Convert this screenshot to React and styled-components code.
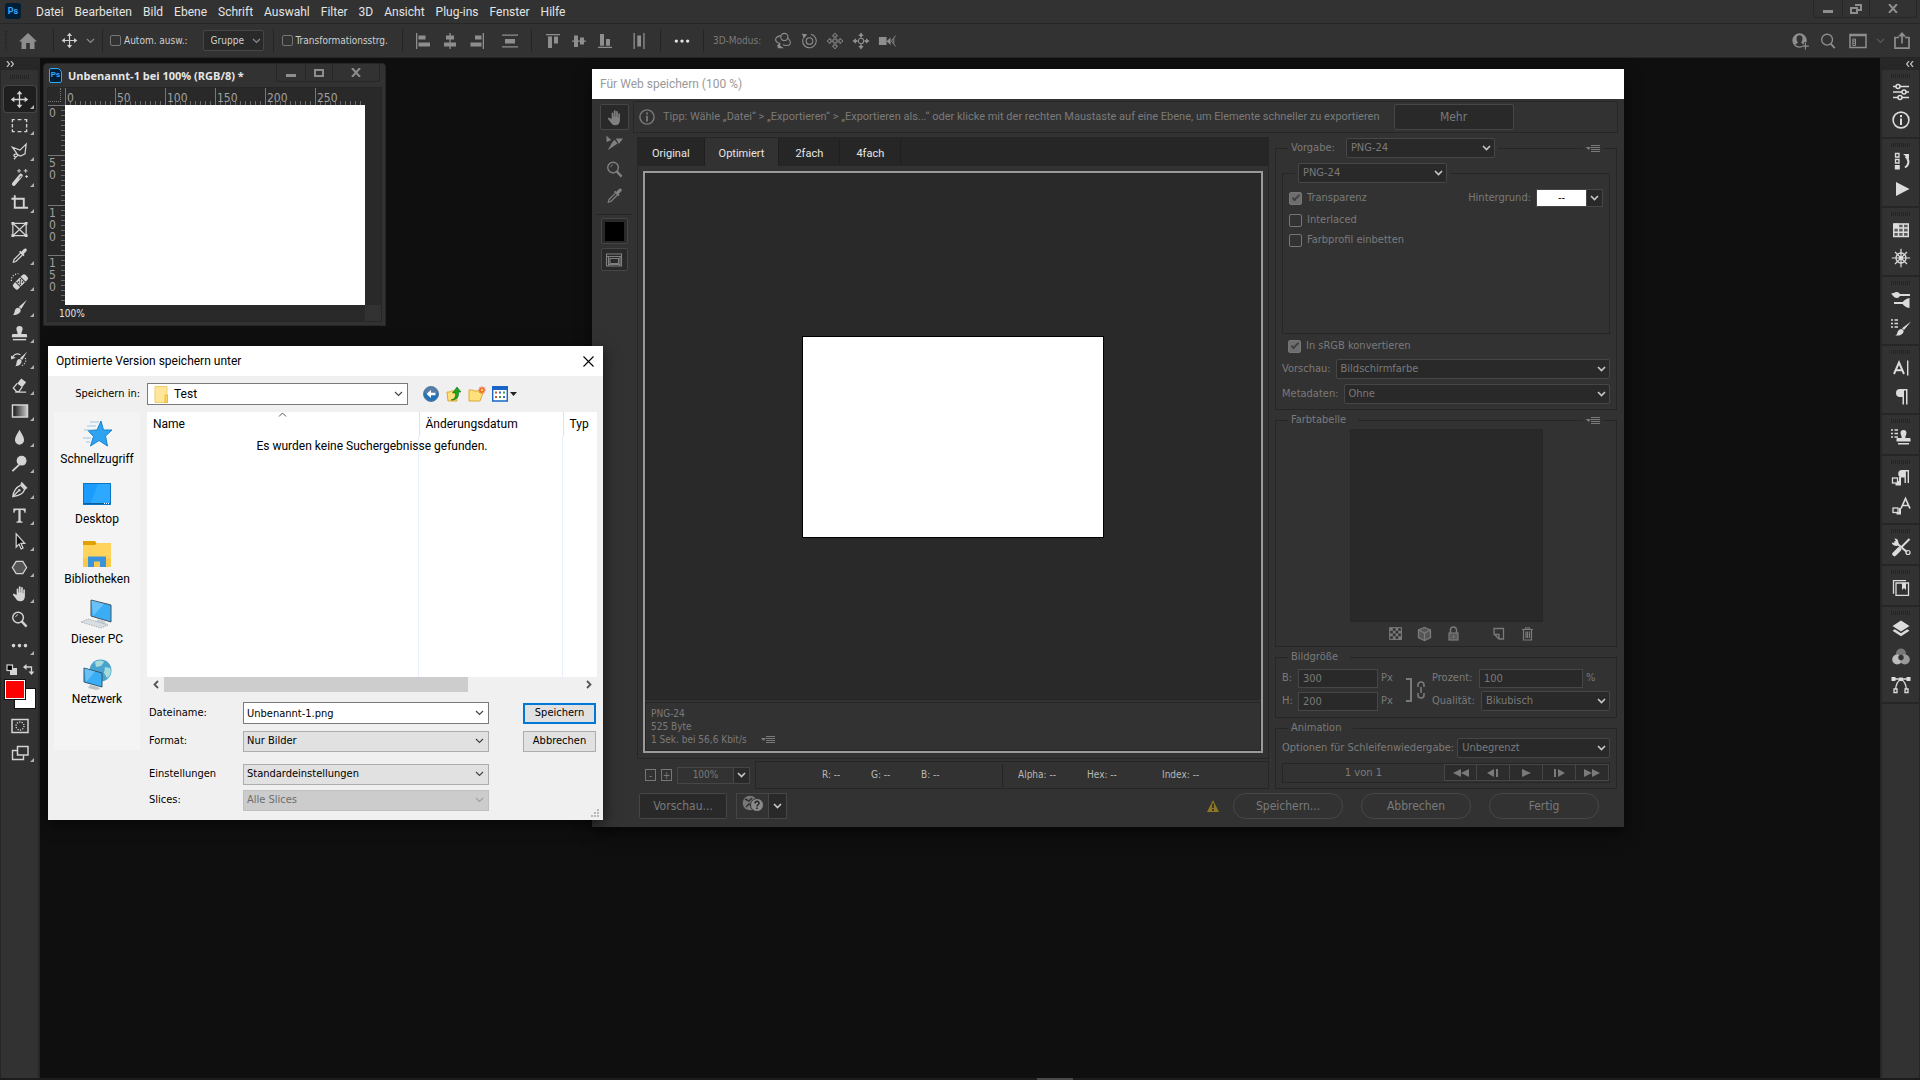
import React from "react";
import styled, { createGlobalStyle, css } from "styled-components";

const UI = `Roboto, "Open Sans", sans-serif`;
const PANEL = `"DejaVu Sans Condensed", "DejaVu Sans", sans-serif`;

const c = {
  bg: "#323232",
  dark: "#292929",
  darker: "#262626",
  line: "#262626",
  edge: "#464646",
  canvas: "#0f0f0f",
  icon: "#d4d4d4",
  mute: "#8e8e8e",
  dim: "#7a7a7a",
};

const Global = createGlobalStyle`
  *, *::before, *::after { box-sizing: border-box; }
  body { margin: 0; background: ${c.canvas}; overflow: hidden; }
  button, input, select { font: inherit; color: inherit; margin: 0; padding: 0; border: 0; background: none; border-radius: 0; outline: none; }
  svg { display: block; flex: none; }
`;

/* ---------- icons ---------- */

const Svg = ({ size = 20, w, h, box, children }) => (
  <svg
    width={w || size}
    height={h || size}
    viewBox={box || `0 0 ${w || size} ${h || size}`}
    fill="none"
    stroke="currentColor"
    strokeWidth="1.5"
    aria-hidden="true"
  >
    {children}
  </svg>
);
const F = (p) => <path fill="currentColor" stroke="none" {...p} />;

const I = {
  move: (
    <>
      <path d="M10 3v14M3 10h14" strokeWidth="1.4" />
      <F d="M10 .8 13 4.6H7zM10 19.2 7 15.4h6zM.8 10 4.6 7v6zM19.2 10 15.4 13V7z" />
    </>
  ),
  marquee: <path d="M2.5 6.5V3.8H5M8 3.8h4M15 3.8h2.5v2.7M17.5 8.5v3.5M17.5 14v2.5H15M12 16.5H8M5 16.5H2.5V14M2.5 12V8.5" strokeWidth="1.4" />,
  lasso: <path d="M7.5 12.5 2.5 5.5l8 3L17 2.2l-1.2 10.3-4.8 2.3-4-2c-2.2-.6-3.6 1-2.5 2.2s4 .3 3.6-1.7M6 15.3c-.2 1.3-.8 2.2-1.9 2.9" strokeWidth="1.3" />,
  wand: (
    <>
      <path d="M4 16.8 11.5 8" strokeWidth="4" strokeLinecap="round" />
      <path d="M9.7 11 12 8.3" stroke="#323232" strokeWidth="1" />
      <path d="M9.5 1v4M7.5 3h4M16.5 1v4M14.5 3h4M17.5 7.5v3M16 9h3" strokeWidth="1" />
    </>
  ),
  crop: <path d="M1.5 5H14.5v10.5M5 1.2v13.3h10M14 14.5h5" strokeWidth="2" />,
  frame: (
    <>
      <path d="M3 3.5h14v13H3zM3 3.5l14 13M17 3.5l-14 13" strokeWidth="1.3" />
      <F d="M1.5 2h3v3h-3zM15.5 2h3v3h-3zM1.5 15h3v3h-3zM15.5 15h3v3h-3z" />
    </>
  ),
  dropper: (
    <>
      <path d="M11 7.5 4.2 14.3 3.5 17l2.7-.7L13 9.5" strokeWidth="1.3" />
      <F d="M9.5 6.2 10.8 5l1.2 1 2.6-2.8c2-1.8 4.2.4 2.6 2.4L14.4 8.3l1 1.2-1.3 1.3z" />
    </>
  ),
  heal: (
    <>
      <g transform="rotate(-45 11 10.5)">
        <rect x="2" y="6.8" width="18" height="7.4" rx="2.5" fill="currentColor" stroke="none" />
        <path d="M7.5 6.8v7.4M14.5 6.8v7.4" stroke="#323232" strokeWidth="1" />
        <path d="M9.3 9h.1M12.5 9h.1M9.3 12h.1M12.5 12h.1M10.9 10.5h.1" stroke="#323232" strokeWidth="1.6" strokeLinecap="round" />
      </g>
      <path d="M1.5 9.5C1 5 4 2 9 1.8" strokeDasharray="1.2 1.6" strokeWidth="1.2" />
    </>
  ),
  brush: (
    <>
      <F d="M17.8 1.8 11.8 11.6 9.2 9.4z" />
      <F d="M8.3 10.2c1.8.2 2.8 1.2 3 2.7-.3 3-3.6 5.3-8.3 5.1 1.9-1.4 1.5-3 2.2-5 .6-1.7 1.8-2.8 3.1-2.8z" />
    </>
  ),
  stamp: (
    <>
      <F d="M10 2a3.3 3.3 0 0 1 3.3 3.3c0 1.7-1.3 2.7-1.3 5.2h4.5c.8 0 1.5.6 1.5 1.5v2H2v-2c0-.9.7-1.5 1.5-1.5H8c0-2.5-1.3-3.5-1.3-5.2A3.3 3.3 0 0 1 10 2z" />
      <F d="M3 15.7h14V17.2H3z" />
    </>
  ),
  history: (
    <>
      <F d="M18 1.8 12.8 10.5 10.5 8.7z" />
      <F d="M9.7 9.5c1.5.2 2.3 1 2.5 2.3-.3 3-2.7 5.2-6.7 5.2 1.5-1.4 1-2.8 1.5-4.5.4-1.5 1.4-2.9 2.7-3z" />
      <path d="M3 7C5 4 8 3.5 11 5" strokeWidth="1.2" />
      <F d="M1 5.8 6 8.2 1.2 10z" />
      <path d="M16 8.5c1.5 3 0 6-3.5 8" strokeDasharray="1.2 1.6" strokeWidth="1.2" />
    </>
  ),
  eraser: (
    <>
      <F d="M11.8 2.5 17 6.5 12.8 11.8 7.6 7.8z" />
      <path d="M7.6 7.8 3.5 12.5 7 16.5l2.5-.3 3.3-4.4M5.5 17h11.5" strokeWidth="1.4" />
    </>
  ),
  blur: <F d="M10 1.8c2 3.8 4.8 7.2 4.8 10.7a4.8 5 0 0 1-9.6 0C5.2 9 8 5.6 10 1.8z" />,
  dodge: (
    <>
      <circle cx="12.2" cy="7" r="5.2" fill="currentColor" stroke="none" />
      <path d="M9.5 11.5 2.5 18" strokeWidth="2" />
    </>
  ),
  pen: (
    <>
      <path d="M3 17.5C3.5 13 5 8.5 11.5 5.5l4 4.5C13.5 15 8 16.8 3 17.5zM3.5 17 9 11.3" strokeWidth="1.4" />
      <circle cx="9.8" cy="10.7" r="1.3" fill="currentColor" stroke="none" />
      <F d="M12.3 1.8 18.5 8.3 16 10 11 4.3z" />
    </>
  ),
  type: <F d="M3.5 2.5h13V7h-1.3c-.3-2-.8-2.7-2.7-2.7H11.2v10.7c0 1 .4 1.2 2 1.3V17.5H6.8v-1.2c1.6-.1 2-.3 2-1.3V4.3H7.5C5.6 4.3 5.1 5 4.8 7H3.5z" />,
  select: <path d="M6.5 2v14l3-3.3 2.2 5.1 2-.9-2.2-5h4z" fill="#111" strokeWidth="1.3" />,
  shape: <path d="M6.5 3.5h7l4 6.5-4 6.5h-7l-4-6.5z" fill="#555" strokeWidth="1.3" />,
  hand: <F d="M7 11.5V5.2a1 1 0 0 1 1.8 0V9h.5V3a1 1 0 0 1 1.9 0v6h.5V3.8a1 1 0 0 1 1.8 0V9.7h.5V6.2a.9.9 0 0 1 1.7 0v6.3c0 3.6-1.8 5.7-4.9 5.7-2.6 0-3.7-1.2-4.9-3.2L3.2 11.6c-.7-1 .6-1.9 1.5-1.1z" />,
  zoom: (
    <>
      <circle cx="8.5" cy="8" r="5.6" />
      <path d="M6 7.5c.2-1.5 1.2-2.3 2.5-2.5" strokeWidth="1" />
      <path d="M12.3 12 17.5 17.5" strokeWidth="2.4" />
    </>
  ),
  dots: <F d="M3.7 8.2a1.9 1.9 0 1 1-.01 3.8 1.9 1.9 0 0 1 0-3.8zM10 8.2a1.9 1.9 0 1 1-.01 3.8 1.9 1.9 0 0 1 0-3.8zM16.3 8.2a1.9 1.9 0 1 1-.01 3.8 1.9 1.9 0 0 1 0-3.8z" />,
  mask: (
    <>
      <rect x="2" y="3.5" width="16" height="13" />
      <circle cx="10" cy="10" r="4" strokeDasharray="1.2 1.3" strokeWidth="1.3" />
    </>
  ),
  screen: (
    <>
      <path d="M12 8.5H2.5v9h11v-4" strokeWidth="1.4" />
      <rect x="7.5" y="4.5" width="10.5" height="8.5" fill="#323232" />
    </>
  ),
  slice: (
    <>
      <F d="M1.5 2 7 6.8 1.8 9z" />
      <F d="M12 5h8l-4.5 6zM10.5 6.5 14 10.5 3 18 7.5 10z" />
    </>
  ),
  home: <F d="M10 2 19 10.5h-2.5V18h-4.7v-6H8.2v6H3.5v-7.5H1z" />,
  alignL: <F d="M2 2h1.3v16H2zM4.5 4.5h7v4h-7zM4.5 11.5H16v4H4.5z" />,
  alignC: <F d="M9.4 2h1.3v16H9.4zM6 4.5h8v4H6zM4 11.5h12v4H4z" />,
  alignR: <F d="M16.7 2H18v16h-1.3zM9 4.5h6.5v4H9zM4.5 11.5h11v4h-11z" />,
  distV: <F d="M2 3.5h16v1.3H2zM5 8h10v4.5H5zM2 15.2h16v1.3H2z" />,
  alignT: <F d="M3 3h14v1.3H3zM5 5.5h4V17H5zM11 5.5h4v7h-4z" />,
  alignM: <F d="M3 9.4h14v1.3H3zM5 4.5h4v11.5H5zM11 6.5h4v7h-4z" />,
  alignB: <F d="M3 15.7h14V17H3zM5 3h4v11.8H5zM11 8h4v6.8h-4z" />,
  distH: <F d="M4.5 2h1.3v16H4.5zM8.3 4.5h3.7v11H8.3zM14.3 2h1.3v16h-1.3z" />,
  orbit: (
    <>
      <circle cx="11.5" cy="5.5" r="4" strokeWidth="1.2" />
      <path d="M7.5 4C3 5 1.5 7 1.8 9c.3 1.5 2 3 4.5 3.8M15 6.5c3 2 4 6 2.5 7.5-1.2 1.2-5 1.2-7.5.2" strokeWidth="1.2" />
      <F d="M7 11.5v6L3 15.5zM5 14l6 4H4z" />
    </>
  ),
  roll: (
    <>
      <circle cx="10.5" cy="10" r="3.7" strokeWidth="1.2" />
      <path d="M6.5 3.5A7.6 7.6 0 1 0 12 2.5" strokeWidth="1.2" />
      <F d="M2 2l6 .5L4.5 7z" />
    </>
  ),
  pan: <path d="M10 1.2 12.8 4.5H11v4.5h4.5V7.2L18.8 10l-3.3 2.8V11H11v4.5h1.8L10 18.8 7.2 15.5H9V11H4.5v1.8L1.2 10l3.3-2.8V9H9V4.5H7.2z" strokeWidth="1.1" />,
  slide: (
    <>
      <circle cx="10" cy="10" r="3" strokeWidth="1.2" />
      <F d="M10 .5l3 4h-2V6H9V4.5H7zM10 19.5l-3-4h2v-1.5h2v1.5h2zM.5 10l4-3v2H6v2H4.5v2zM19.5 10l-4-3v2H14v2h1.5v2z" />
    </>
  ),
  cam: (
    <>
      <F d="M1 5.5h8.5v9H1zM9.5 10.2 14 6v8.5z" />
      <path d="M19.5 4 15 10l4.5 6M17.5 7v6" strokeWidth="1" />
    </>
  ),
  user: (
    <>
      <F
        fillRule="evenodd"
        d="M9.5 1.5a8 8 0 1 1 0 16 8 8 0 0 1 0-16zM9.5 3.7c-2.3 0-3.3 1.7-3.3 3.7 0 1.7.6 2.8 1.3 3.7.2 1.3-.4 1.7-2.9 2.8a6.7 6.7 0 0 0 9.8 0c-2.5-1.1-3.1-1.5-2.9-2.8.7-.9 1.3-2 1.3-3.7 0-2-1-3.7-3.3-3.7z"
      />
      <path d="M16 11.5v8M12 15.5h8" stroke="#323232" strokeWidth="3.5" />
      <path d="M16 12v7.5M12.3 15.7h7.5" strokeWidth="1.3" />
    </>
  ),
  search: (
    <>
      <circle cx="9" cy="8.5" r="6" />
      <path d="M13 13l4.5 4.8" strokeWidth="2" />
    </>
  ),
  workspace: (
    <>
      <path d="M2 3.5h16v13H2zM2 4.5h16" strokeWidth="1.5" />
      <path d="M4.8 8h2.7v6.5H4.8zM5 10h2M5 12.2h2" strokeWidth="1" />
    </>
  ),
  share: (
    <>
      <path d="M7 6.5H3v10.7h14V6.5h-4" strokeWidth="1.7" />
      <path d="M10 12.5V4" strokeWidth="1.7" />
      <F d="M10 1l4 4.5H6z" />
    </>
  ),
  sliders: (
    <>
      <path d="M2 4.5h3M9 4.5h9M2 10h9M15 10h3M2 15.5h5M11 15.5h7" strokeWidth="1.4" />
      <circle cx="7" cy="4.5" r="2" /> <circle cx="13" cy="10" r="2" /> <circle cx="9" cy="15.5" r="2" />
    </>
  ),
  info: (
    <>
      <circle cx="10" cy="10" r="7.9" strokeWidth="1.6" />
      <F d="M9 5h2v2.2H9zM9 8.5h2v6.5H9z" />
    </>
  ),
  hist: (
    <>
      <path d="M4.5 2.5H8V6H4.5zM4.5 8.5H8V12H4.5z" strokeWidth="1.3" />
      <F d="M3.8 14h5v4.5h-5zM12 3h6v5z" />
      <path d="M14.5 5.5c4 3 4 8-.5 11" strokeWidth="2" />
    </>
  ),
  play: <F d="M5 3 18.5 10 5 17z" />,
  grid: (
    <>
      <F d="M3 3.5h14v13H3z" opacity=".25" />
      <F d="M3 3.5h5V8H3z" />
      <path d="M2.7 4h14.6v12.5H2.7zM2.7 8h14.6M2.7 12.2h14.6M7.5 4v12.5M12.3 4v12.5" strokeWidth="1.4" />
    </>
  ),
  wheel: (
    <>
      <circle cx="10" cy="10" r="5" strokeWidth="1.3" />
      <circle cx="10" cy="10" r="1.8" strokeWidth="1" />
      <path d="M10 .8v18.4M.8 10h18.4M4 4l12 12M16 4 4 16" strokeWidth="1.2" />
    </>
  ),
  brushSets: (
    <>
      <path d="M8 6h11M3 14h9" strokeWidth="2" />
      <F d="M0 4.5c3-.2 3.5-1.5 5.5-1.5C7.5 3 9 4.3 9 6S7.5 9 5.5 9C3 9 2 6.5 0 4.5zM18.5 9v10c-3 0-6.5-3-7.5-5 1-2 4-4.5 7.5-5z" />
    </>
  ),
  brushList: (
    <>
      <path d="M0 3h2M0 6.5h2M0 10h2M3.5 3H7M3.5 6.5H7M3.5 10H7" strokeWidth="1.4" />
      <F d="M20 4.5 13 13l-2-1.8zM10.3 12c2 .3 2.8 1.8 2 3.5-1 2.3-4 3.5-8 3 2-1 1.5-2 2.5-4 .8-1.5 2-2.5 3.5-2.5z" />
    </>
  ),
  char: (
    <>
      <path d="M3 16 8 4.5 13 16M4.8 12.3h6.4" strokeWidth="1.9" />
      <path d="M16.7 2.5v15" strokeWidth="1.4" />
    </>
  ),
  para: <F d="M9 3h7.5v15.5h-1.5V4.5h-2v14h-1.5V11H9a4 4 0 0 1 0-8z" />,
  stampList: (
    <>
      <path d="M0 3h2M0 6.5h2M0 10h2M3.5 3H7M3.5 6.5H7M3.5 10H7" strokeWidth="1.4" />
      <F d="M12.5 3a3 3 0 0 1 3 3c0 1.5-1.2 2.5-1.2 5h4.2c.6 0 1 .5 1 1v2.5H5.5V12c0-.5.4-1 1-1h4.2c0-2.5-1.2-3.5-1.2-5a3 3 0 0 1 3-3zM7 16h11v1.4H7z" />
    </>
  ),
  paraStyle: (
    <>
      <F d="M11 2h7v13h-1.4V3.5h-1.7V15h-1.4V9.500H11a3.700 3.700 0 0 1 0-7.500zM4.500 13H8V9h2v8.500H4.500z" />
      <rect x="1.5" y="10" width="5" height="5" fill="#323232" strokeWidth="1.3" />
    </>
  ),
  charStyle: (
    <>
      <path d="M10 12.5 14.5 2.5 19 12.5M11.7 9.5h5.6" strokeWidth="1.7" />
      <F d="M5.5 16H8v-4h2v6.5H5.5z" />
      <rect x="2" y="12" width="5" height="4.5" fill="#323232" strokeWidth="1.3" />
    </>
  ),
  tools: (
    <>
      <path d="M3.5 4.5 16 15" strokeWidth="2" />
      <path d="M18.5 2 10 10.5" strokeWidth="2" />
      <path d="M8 12.5 3.5 17" strokeWidth="4.5" strokeLinecap="round" />
      <F d="M3.5 1.5C6 1.5 7.5 3 7.3 5.3L8 7l-2 2C3 9 1 7.8.8 5.5L3.5 6 5 4.500z" />
      <circle cx="17" cy="15.5" r="2" strokeWidth="1.2" />
    </>
  ),
  library: (
    <>
      <path d="M15 2.7H2.5v13M5 5h12.5v12.3H5z" strokeWidth="1.3" />
      <F d="M11 5h4v7l-2-2-2 2z" />
    </>
  ),
  layers: <F d="M10 1.5 18.5 7 10 12.5 1.5 7zM10 14.2 16.2 10.2 18.5 11.8 10 17.3 1.5 11.8 3.8 10.2z" />,
  channels: (
    <>
      <circle cx="10" cy="6.5" r="5" fill="#777" stroke="none" />
      <circle cx="6.2" cy="12.5" r="5" fill="#bdbdbd" stroke="none" />
      <circle cx="13.8" cy="12.5" r="5" fill="#9a9a9a" stroke="none" />
      <circle cx="10" cy="10.5" r="2.7" fill="#333" stroke="none" />
    </>
  ),
  paths: (
    <>
      <path d="M3 4h14M4.5 15C5 9 7 5.5 10 4.5c3 1 5 4.5 5.5 10.5" strokeWidth="1.3" />
      <F d="M.5 2h4v4h-4zM15.5 2h4v4h-4zM8.2 2.5h3.5V6H8.2z" />
      <path d="M3 14h3v3.5H3zM14 14h3v3.5h-3z" fill="#323232" strokeWidth="1.3" />
    </>
  ),
  transp: (
    <>
      <rect x="3" y="3" width="13" height="13" strokeWidth="1.2" />
      <F d="M3 3h3.5v3.5H3zM9.5 3h3v3.5h-3zM6.5 6.5h3v3h-3zM12.5 6.5H16v3h-3.5zM3 9.5h3.5v3H3zM9.5 9.5h3v3h-3zM6.5 12.5h3V16h-3zM12.5 12.5H16V16h-3.5z" />
    </>
  ),
  cube: (
    <>
      <path d="M9.5 3.5 15.5 6v7.5l-6 3-6-3V6z" strokeWidth="1.3" fill="#555" />
      <path d="M3.5 6l6 3 6-3M9.5 9v7.5" strokeWidth="1.2" />
    </>
  ),
  lock: (
    <>
      <path d="M6.5 9V6a3 3 0 0 1 6 0v3" strokeWidth="1.5" />
      <rect x="5" y="9" width="9" height="7" fill="#5a5a5a" strokeWidth="1.2" />
      <F d="M8.8 11.5h1.5v2.5H8.8z" />
    </>
  ),
  note: <path d="M5 4.5h9.5V15H10L5 10zM10 15v-4.5H5" strokeWidth="1.3" />,
  trash: <path d="M4 5.5h11M7.5 5.5V4h4v1.5M5.5 5.5V16h8V5.5M8 7.5v6.5M9.5 7.5v6.5M11.5 7.5v6.5" strokeWidth="1.2" />,
  doc: <path d="M2.5 4h15v12h-15zM2.5 6.5h15M6 8.5h8.5v5H6zM4.500 6.500v9M16 6.500v9M4.500 14.500h11" strokeWidth="1.1" />,
};
const Icon = ({ name, size = 20 }) => (
  <Svg size={size} box="0 0 20 20">
    {I[name]}
  </Svg>
);
const Chevron = ({ bold }) => (
  <Svg w={9} h={6}>
    <path d="M1 1l3.5 3.5L8 1" strokeWidth={bold ? 1.6 : 1.2} />
  </Svg>
);
const FlyIcon = () => (
  <Svg w={14} h={8}>
    <F d="M0 2h5L2.5 5z" />
    <path d="M5 .5h9M5 2.5h9M5 4.5h9M5 6.5h9" strokeWidth="1" />
  </Svg>
);
const MinimizeIcon = () => (
  <Svg w={10} h={10}>
    <F d="M0 6h10v3H0z" />
  </Svg>
);
const CrossIcon = () => (
  <Svg w={10} h={9}>
    <path d="M1 0l8 9M9 0 1 9" strokeWidth="2" />
  </Svg>
);

/* ---------- shell ---------- */

const Shell = styled.div`
  height: 100vh;
  display: flex;
  flex-direction: column;
  background: ${c.canvas};
  color: #ddd;
  font: 11px/14px ${PANEL};
`;
const MenuBar = styled.header`
  display: flex;
  height: 24px;
  padding: 0 3px 0 5px;
  background: ${c.bg};
  border-bottom: 1px solid ${c.line};
`;
const PsLogo = styled.span`
  display: grid;
  place-items: center;
  width: 16px;
  height: 16px;
  margin-top: 3px;
  border-radius: 3px;
  background: #001e36;
  color: #31a8ff;
  font: bold 9px/16px ${UI};
`;
const Menus = styled.nav`
  display: flex;
  flex: 1;
  gap: 11px;
  padding-left: 15px;
  font: 12px/22px ${UI};
`;
const MenuItem = styled.button`
  color: #e4e4e4;
`;
const WinButtons = styled.div`
  display: flex;
  align-self: flex-start;
  height: 18px;
  border: 1px solid ${c.line};
  border-top: 0;
  border-radius: 0 0 3px 3px;
  color: ${c.mute};
`;
const WinButton = styled.button`
  display: grid;
  place-items: center;
  width: ${(p) => p.$w || 27}px;
  & + & {
    border-left: 1px solid ${c.line};
  }
`;

const Options = styled.div`
  display: flex;
  align-items: center;
  height: 34px;
  padding: 0 8px 0 5px;
  background: ${c.bg};
  border-bottom: 1px solid ${c.line};
  color: #d0d0d0;
  font: 10px/14px ${PANEL};
`;
const Grip = styled.span`
  flex: none;
  width: ${(p) => (p.$v ? 2 : 19)}px;
  height: ${(p) => (p.$v ? 20 : 4)}px;
  background: repeating-linear-gradient(
    ${(p) => (p.$v ? 180 : 90)}deg,
    #242424 0 1px,
    transparent 1px 2px
  );
`;
const OptGroup = styled.div`
  display: flex;
  align-items: center;
  gap: ${(p) => p.$gap || 0}px;
  padding: 0 ${(p) => p.$pr ?? 11}px 0 ${(p) => p.$pl ?? 11}px;
  color: ${(p) => p.$color || "inherit"};
`;
const Sep = styled.span`
  width: 1px;
  height: 23px;
  background: #242424;
`;
const IconButton = styled.button`
  display: grid;
  place-items: center;
  width: ${(p) => p.$w || 20}px;
  height: 20px;
  color: ${(p) => p.$color || "inherit"};
`;
const CheckLabel = styled.label`
  display: flex;
  align-items: center;
  gap: ${(p) => p.$gap || 4}px;
  white-space: nowrap;
`;
const Check = styled.input.attrs({ type: "checkbox" })`
  appearance: none;
  display: grid;
  place-items: center;
  flex: none;
  width: ${(p) => (p.$small ? 11 : 13)}px;
  height: ${(p) => (p.$small ? 11 : 13)}px;
  border: 1px solid #767676;
  border-radius: 2px;
  &:checked {
    background: #6e6e6e;
  }
  &:checked::before {
    content: "";
    width: 4px;
    height: 8px;
    margin-top: -2px;
    border: solid #404040;
    border-width: 0 2px 2px 0;
    transform: rotate(45deg);
  }
`;

/* a drop-down: the select and its chevron share one grid cell */
const SelectBox = styled.span`
  display: grid;
  align-items: center;
  height: ${(p) => p.$h || 20}px;
  ${(p) => (p.$w ? `width: ${p.$w}px;` : "flex: 1;")}
  min-width: 0;
  color: ${(p) => p.$arrow || "#c8c8c8"};
  & > * {
    grid-area: 1 / 1;
  }
  & > svg {
    justify-self: end;
    margin-right: ${(p) => p.$ar || 4}px;
    pointer-events: none;
  }
`;
const DarkSelect = styled.select`
  appearance: none;
  width: 100%;
  height: 100%;
  padding: 0 14px 0 ${(p) => p.$pl || 4}px;
  background: ${c.dark};
  border: 1px solid ${c.edge};
  border-radius: 2px;
  color: ${(p) => p.$color || c.dim};
`;
const Select = ({ id, label, value, options, w, h, color, pl, arrow, ar }) => (
  <SelectBox $w={w} $h={h} $arrow={arrow} $ar={ar}>
    <DarkSelect id={id} aria-label={label} defaultValue={value} $color={color} $pl={pl}>
      {(options || [value]).map((o) => (
        <option key={o}>{o}</option>
      ))}
    </DarkSelect>
    <Chevron bold={!arrow} />
  </SelectBox>
);

const Workspace = styled.div`
  display: flex;
  flex: 1;
  min-height: 0;
`;
const Stage = styled.main`
  position: relative;
  flex: 1;
  min-width: 0;
  overflow: hidden;
`;
const StatusStrip = styled.footer`
  display: flex;
  height: 2px;
  padding-left: 54%;
  background: #1c1c1c;
`;
const StripThumb = styled.span`
  width: 36px;
  background: #4a4a4a;
`;

/* ---------- left toolbar and right dock ---------- */

const Column = styled.aside`
  display: flex;
  flex-direction: column;
  align-items: stretch;
  width: 40px;
  background: ${c.bg};
  border: solid ${c.line};
  border-width: 0 ${(p) => (p.$left ? 2 : 1)}px 0 ${(p) => (p.$left ? 1 : 2)}px;
`;
const ColumnHead = styled.button`
  display: flex;
  align-items: center;
  justify-content: ${(p) => (p.$end ? "flex-end" : "flex-start")};
  height: 12px;
  padding: 0 5px;
  background: #272727;
  border-bottom: 1px solid ${c.line};
  color: #c0c0c0;
`;
const ToolList = styled.div`
  display: flex;
  flex-direction: column;
  align-items: center;
  padding-top: 3px;
`;
const GripRow = styled.div`
  display: grid;
  place-items: center;
  height: 13px;
`;
const Tool = styled.button`
  display: grid;
  width: 32px;
  height: 26px;
  color: ${c.icon};
  border-radius: 3px;
  ${(p) =>
    p.$active &&
    css`
      background: #1f1f1f;
      box-shadow: 0 0 0 1px ${c.edge};
    `}
  & > svg {
    grid-area: 1 / 1;
    place-self: center;
  }
`;
const Corner = styled.i`
  grid-area: 1 / 1;
  place-self: end;
  margin: 0 2px 3px 0;
  border: solid transparent;
  border-width: 0 0 4px 4px;
  border-bottom-color: #b0b0b0;
`;
const MiniRow = styled.div`
  display: flex;
  align-items: center;
  gap: 6px;
  height: 22px;
  color: ${c.icon};
`;
const Swatches = styled.div`
  display: grid;
  grid-template: 9px 10px 9px / 10px 10px 10px;
  margin-bottom: 5px;
`;
const Swatch = styled.button`
  grid-area: ${(p) => p.$area};
  z-index: ${(p) => p.$z};
  background: ${(p) => p.$color};
  border: 1px solid #fff;
  outline: 1px solid #111;
`;
const DockGroup = styled.div`
  display: flex;
  flex-direction: column;
  align-items: center;
  padding: 4px 0 3px;
  border-bottom: 2px solid ${c.line};
  color: #dcdcdc;
`;
const DockButton = styled.button`
  display: grid;
  place-items: center;
  width: 28px;
  height: 28px;
`;

/* ---------- document window ---------- */

const DocWindow = styled.section`
  position: absolute;
  left: 3px;
  top: 5px;
  width: 343px;
  padding: 0 3px 3px;
  background: ${c.bg};
  border: 1px solid #262626;
  border-radius: 4px 4px 0 0;
`;
const DocTitle = styled.div`
  display: flex;
  align-items: flex-start;
  gap: 6px;
  height: 23px;
  padding: 0 2px;
  color: #e6e6e6;
  font: bold 11px/24px "Open Sans", "Noto Sans", sans-serif;
`;
const DocBadge = styled.span`
  width: 13px;
  height: 15px;
  margin-top: 4px;
  border: 1px solid #31a8ff;
  border-radius: 2px 5px 2px 2px;
  background: #001e36;
  color: #31a8ff;
  font: bold 8px/12px ${UI};
  text-align: center;
`;
const DocName = styled.span`
  flex: 1;
`;
const DocBody = styled.div`
  display: grid;
  grid-template: 17px 200px 16px / 17px 300px 1fr;
  background: ${c.dark};
  border: 1px solid ${c.line};
`;
const RulerOrigin = styled.span`
  margin: 0 4px 3px 0;
  border: dotted #777;
  border-width: 0 1px 1px 0;
`;
const HRuler = styled.div`
  display: flex;
  background: repeating-linear-gradient(90deg, #6b6b6b 0 1px, transparent 1px 5px) 0 100% / 100% 4px no-repeat;
`;
const HTick = styled.span`
  width: 50px;
  padding-left: 1px;
  border-left: 1px solid #777;
  color: #a0a0a0;
  font: 12px/20px ${PANEL};
`;
const VRuler = styled.div`
  background: repeating-linear-gradient(180deg, #6b6b6b 0 1px, transparent 1px 5px) 100% 0 / 4px 100% no-repeat;
`;
const VTick = styled.div`
  display: flex;
  flex-direction: column;
  height: 50px;
  padding: 1px 0 0 1px;
  border-top: 1px solid #777;
  color: #a0a0a0;
  font: 12px/12px ${PANEL};
`;
const Paper = styled.div`
  background: #fff;
`;
const DocStatus = styled.div`
  grid-column: 1 / 3;
  padding-left: 11px;
  font: 10px/18px ${PANEL};
  color: #e4e4e4;
`;
const DocCorner = styled.span`
  background: ${c.bg};
`;

/* ---------- save for web ---------- */

const WebDialog = styled.section`
  position: absolute;
  left: 552px;
  top: 11px;
  width: 1032px;
  background: ${c.bg};
  color: ${c.dim};
  box-shadow: 0 6px 14px rgba(0, 0, 0, 0.6);
`;
const WebTitle = styled.h1`
  margin: 0;
  padding-left: 8px;
  background: #fff;
  color: #999;
  font: 12px/30px ${UI};
`;
const WebMain = styled.div`
  display: flex;
  padding: 2px 6px 8px 4px;
`;
const WebTools = styled.div`
  display: flex;
  flex-direction: column;
  align-items: center;
  width: 37px;
  padding: 3px 1px 0 0;
`;
const WebTool = styled.button`
  display: grid;
  place-items: center;
  width: ${(p) => (p.$boxed ? 27 : 29)}px;
  height: ${(p) => p.$h || 26}px;
  color: #808080;
  ${(p) =>
    p.$on &&
    css`
      background: ${c.dark};
      border: 1px solid ${c.edge};
      border-radius: 2px;
    `}
`;
const ToolRule = styled.span`
  align-self: stretch;
  height: 1px;
  margin: 6px 0 3px;
  background: ${c.line};
`;
const ToolStack = styled.div`
  display: grid;
  gap: 4px;
`;
const BlackChip = styled.span`
  width: 19px;
  height: 19px;
  background: #000;
`;
const WebContent = styled.div`
  flex: 1;
  min-width: 0;
`;
const TipBar = styled.div`
  display: flex;
  align-items: center;
  height: 32px;
  padding: 0 4px;
  border: 1px solid ${c.line};
`;
const TipText = styled.p`
  margin: 0 14px 0 7px;
  font: 11px/16px ${UI};
  white-space: nowrap;
`;
const DarkButton = styled.button`
  height: 26px;
  width: ${(p) => p.$w}px;
  background: ${(p) => (p.$pill ? c.bg : c.dark)};
  border: 1px solid ${c.edge};
  border-radius: ${(p) => (p.$pill ? 13 : 2)}px;
  font: 12px/16px ${PANEL};
`;
const Panes = styled.div`
  display: grid;
  grid-template-columns: minmax(0, 1fr) 342px;
  column-gap: 6px;
  padding: 4px 1px 0 4px;
`;
const PreviewCol = styled.div`
  display: flex;
  flex-direction: column;
  gap: 2px;
`;
const Preview = styled.div`
  display: flex;
  flex-direction: column;
  flex: 1;
  border: 1px solid ${c.line};
`;
const Tabs = styled.div`
  display: flex;
  height: 28px;
  background: ${c.darker};
`;
const Tab = styled.button`
  padding: 3px 14px 0;
  min-width: 61px;
  border-right: 1px solid #1f1f1f;
  background: ${(p) => (p.$on ? c.bg : "transparent")};
  color: #e6e6e6;
  font: 11px/14px ${UI};
`;
const Frame = styled.div`
  display: flex;
  flex-direction: column;
  flex: 1;
  margin: 5px;
  border: 2px solid #9a9a9a;
`;
const ImagePane = styled.div`
  display: grid;
  place-items: center;
  flex: 1;
  background: ${c.dark};
  border: 1px solid ${c.line};
`;
const ImagePaper = styled.div`
  width: 302px;
  height: 202px;
  background: #fff;
  border: 1px solid #000;
`;
const FileInfo = styled.div`
  height: 49px;
  margin-top: 2px;
  padding: 4px 5px;
  border: 1px solid ${c.line};
  font: 10px/13px ${PANEL};
`;
const InfoLine = styled.div`
  display: flex;
  align-items: center;
  gap: 14px;
`;
const ReadoutRow = styled.div`
  display: flex;
  align-items: center;
  height: 28px;
  padding-left: 8px;
  gap: 5px;
`;
const StepButton = styled.button`
  width: 11px;
  height: 12px;
  border: 1px solid #777;
  font: 10px/9px ${PANEL};
`;
const ComboBox = styled.div`
  display: flex;
  width: ${(p) => p.$w}px;
  height: ${(p) => p.$h || 17}px;
  border: 1px solid ${c.edge};
`;
const ComboInput = styled.input`
  flex: 1;
  min-width: 0;
  text-align: center;
  font-size: 10px;
`;
const ComboArrow = styled.button`
  display: grid;
  place-items: center;
  width: ${(p) => p.$w || 16}px;
  background: ${c.dark};
  border-left: 1px solid ${c.edge};
  color: #c8c8c8;
`;
const Readout = styled.div`
  display: flex;
  flex: 1;
  align-self: stretch;
  align-items: center;
  padding-left: 66px;
  border: 1px solid ${c.line};
  color: #b8b8b8;
  font-size: 10px;
`;
const Val = styled.span`
  width: ${(p) => p.$w}px;
`;

/* settings */

const Settings = styled.div`
  display: flex;
  flex-direction: column;
  gap: 2px;
  padding-top: 1px;
  font-size: 11px;
`;
const Group = styled.fieldset`
  position: relative;
  margin: 0;
  min-width: 0;
  padding: 0 6px ${(p) => p.$pb || 5}px;
  border: 1px solid ${c.line};
`;
const Legend = styled.legend`
  display: flex;
  align-items: center;
  gap: 11px;
  margin-left: 6px;
  padding: 0 ${(p) => p.$pr || 3}px 0 3px;
  line-height: 16px;
`;
const FlyButton = styled.button`
  position: absolute;
  top: ${(p) => p.$top}px;
  right: 13px;
  padding: 0 3px;
  background: ${c.bg};
`;
const Inner = styled.fieldset`
  margin: 5px 0 0;
  min-width: 0;
  min-height: 171px;
  padding: 5px 6px 0;
  border: 1px solid ${c.line};
`;
const Line = styled.div`
  display: flex;
  align-items: center;
  height: 20px;
  gap: ${(p) => p.$gap || 5}px;
  margin-top: ${(p) => p.$mt || 0}px;
  padding-left: ${(p) => p.$pl || 0}px;
`;
const ColorCombo = styled.div`
  display: flex;
  width: 67px;
  height: 18px;
  border: 1px solid ${c.edge};
`;
const ColorChip = styled.span`
  flex: 1;
  background: #fff;
  color: #000;
  text-align: center;
  line-height: 15px;
`;
const ColorTable = styled.div`
  width: 193px;
  height: 193px;
  margin: 1px auto 0;
  background: ${c.dark};
  border: 1px solid ${c.line};
`;
const TableTools = styled.div`
  display: flex;
  justify-content: center;
  align-items: center;
  gap: 9px;
  height: 23px;
  padding-left: 32px;
`;
const SizeGrid = styled.div`
  display: grid;
  grid-template-columns: 16px 80px 24px 30px 46px minmax(0, 1fr);
  grid-template-rows: 20px 20px;
  row-gap: 3px;
  align-items: center;
  padding-top: 3px;
`;
const NumInput = styled.input`
  width: ${(p) => p.$w || 80}px;
  height: 19px;
  padding: 0 4px;
  background: ${c.dark};
  border: 1px solid ${c.edge};
`;
const UnitLabel = styled.span`
  padding-left: 3px;
`;
const LinkCell = styled.span`
  grid-area: 1 / 4 / 3 / 5;
`;
const Player = styled.div`
  display: flex;
  height: 20px;
  margin-top: 5px;
  border: 1px solid ${c.line};
`;
const FrameCount = styled.output`
  flex: 1;
  text-align: center;
  font: 10px/18px "DejaVu Sans", sans-serif;
`;
const PlayButton = styled.button`
  display: grid;
  place-items: center;
  width: 33px;
  height: 17px;
  background: #2c2c2c;
  border: 1px solid ${c.edge};
  & + & {
    border-left-width: 0;
  }
`;
const WebFooter = styled.div`
  display: flex;
  align-items: center;
  height: 26px;
  margin: 4px 19px 0 6px;
`;
const Fill = styled.span`
  flex: 1;
`;
const Spaced = styled.div`
  display: flex;
  align-items: center;
  gap: ${(p) => p.$gap || 0}px;
  padding-left: ${(p) => p.$pl || 0}px;
`;

/* ---------- windows save dialog ---------- */

const SaveDialog = styled.section`
  position: absolute;
  left: 8px;
  top: 288px;
  width: 555px;
  background: #f0f0f0;
  color: #000;
  font: 12px/16px ${UI};
  box-shadow: 0 4px 14px rgba(0, 0, 0, 0.6);
`;
const SaveTitle = styled.div`
  display: flex;
  align-items: center;
  justify-content: space-between;
  height: 30px;
  padding: 0 9px 0 8px;
  background: #fff;
`;
const SaveName = styled.h2`
  margin: 0;
  font: inherit;
`;
const CloseX = styled.button`
  display: grid;
  place-items: center;
  width: 12px;
  height: 12px;
`;
const LookRow = styled.div`
  display: flex;
  align-items: center;
  height: 36px;
  padding-left: 6px;
`;
const LookLabel = styled.label`
  width: 86px;
  text-align: right;
  font: 11px/16px ${PANEL};
`;
const LightSelectBox = styled.span`
  display: grid;
  grid-template-columns: auto 1fr;
  align-items: center;
  width: ${(p) => p.$w}px;
  height: ${(p) => p.$h || 22}px;
  margin-left: ${(p) => p.$ml || 0}px;
  background: ${(p) => p.$bg || "#fff"};
  border: 1px solid ${(p) => p.$edge || "#7a7a7a"};
  color: ${(p) => p.$arrow || "#444"};
  & > :not(:first-child) {
    grid-area: 1 / 2;
  }
  & > svg:last-child {
    justify-self: end;
    margin-right: 4px;
    pointer-events: none;
  }
`;
const LightSelect = styled.select`
  appearance: none;
  width: 100%;
  height: 100%;
  padding-left: ${(p) => p.$pl || 3}px;
  color: ${(p) => (p.disabled ? "#6d6d6d" : "#000")};
  opacity: 1;
`;
const LightInput = styled.input`
  width: 100%;
  height: 100%;
  padding-left: 3px;
  color: #000;
`;
const NavIcons = styled.div`
  display: flex;
  align-items: center;
  gap: 5px;
  padding-left: 14px;
`;
const SaveBody = styled.div`
  display: flex;
  gap: 7px;
  padding: 0 6px 9px;
`;
const Places = styled.nav`
  width: 86px;
  height: 338px;
  padding-top: 4px;
  background: #f4f4f4;
`;
const Place = styled.a`
  display: flex;
  flex-direction: column;
  align-items: center;
  gap: 1px;
  height: 60px;
  padding-top: 2px;
  color: #000;
  text-decoration: none;
`;
const SaveMain = styled.div`
  flex: 1;
  min-width: 0;
`;
const FileTable = styled.table`
  width: 100%;
  height: 265px;
  table-layout: fixed;
  border-collapse: collapse;
  background: #fff;
`;
const Th = styled.th`
  width: ${(p) => p.$w}px;
  height: 24px;
  padding: 0 6px;
  border-right: 1px solid #e2e2e2;
  font-weight: normal;
  text-align: left;
  &:last-child {
    border-right: 0;
  }
`;
const Td = styled.td`
  padding: 2px 0;
  vertical-align: top;
  text-align: center;
  background: linear-gradient(#e8f0fb, #e8f0fb) 271px 0 / 1px 100% no-repeat,
    linear-gradient(#e8f0fb, #e8f0fb) 415px 0 / 1px 100% no-repeat;
`;
const ThInner = styled.span`
  display: grid;
  grid-template-columns: 1fr auto 1fr;
  height: 24px;
  line-height: 24px;
`;
const HBar = styled.div`
  display: flex;
  align-items: center;
  height: 15px;
  color: #555;
`;
const HArrow = styled.button`
  display: grid;
  place-items: center;
  width: 17px;
  height: 15px;
`;
const HThumb = styled.span`
  width: 304px;
  height: 15px;
  margin-right: auto;
  background: #cdcdcd;
`;
const SaveForm = styled.form`
  display: grid;
  grid-template-columns: 94px 246px minmax(0, 1fr) 73px;
  grid-template-rows: 24px 24px 2px 22px 22px;
  row-gap: 4px;
  align-items: center;
  margin: 9px 1px 0 2px;
  font: 11px/16px ${PANEL};
`;
const FormGap = styled.span`
  grid-column: 1 / -1;
`;
const FormLabel = styled.label`
  grid-column: 1;
`;
const PushButton = styled.button`
  grid-column: 4;
  height: 21px;
  background: #e1e1e1;
  border: ${(p) => (p.$primary ? "2px solid #0078d7" : "1px solid #adadad")};
`;
const SizeGrip = styled.span`
  position: absolute;
  right: 3px;
  bottom: 2px;
  color: #b8b8b8;
`;

/* ---------- data ---------- */

const menus = ["Datei", "Bearbeiten", "Bild", "Ebene", "Schrift", "Auswahl", "Filter", "3D", "Ansicht", "Plug-ins", "Fenster", "Hilfe"];
const tools = [
  ["move", "Verschieben"], ["marquee", "Auswahlrechteck"], ["lasso", "Lasso"], ["wand", "Zauberstab"], ["crop", "Freistellen"],
  ["frame", "Rahmen"], ["dropper", "Pipette"], ["heal", "Reparatur"], ["brush", "Pinsel"], ["stamp", "Stempel"],
  ["history", "Protokollpinsel"], ["eraser", "Radiergummi"], ["gradient", "Verlauf"], ["blur", "Weichzeichner"],
  ["dodge", "Abwedler"], ["pen", "Zeichenstift"], ["type", "Text"], ["select", "Pfadauswahl"], ["shape", "Form"],
  ["hand", "Hand"], ["zoom", "Zoom"], ["dots", "Mehr"],
];
const noCorner = ["frame", "zoom"];
const dock = [
  ["sliders", "info"], ["hist", "play"], ["grid", "wheel"], ["brushSets", "brushList"], ["char", "para"],
  ["stampList"], ["paraStyle", "charStyle"], ["tools"], ["library"], ["layers", "channels", "paths"],
];

const GradientTool = () => (
  <Svg size={20}>
    <defs>
      <linearGradient id="gt" x1="0" x2="1">
        <stop offset="0" stopColor="#111" />
        <stop offset="1" stopColor="#ccc" />
      </linearGradient>
    </defs>
    <rect x="2.5" y="4" width="15" height="12" fill="url(#gt)" />
  </Svg>
);

/* ---------- place icons ---------- */

const PlaceIcon = {
  Schnellzugriff: (
    <svg width="32" height="32" viewBox="0 0 32 32">
      <path d="M20 3l2.500 9H31l-6.500 6 2 10-8.500-5.500L9.500 28l3-9.500L7 12.500l9-.5z" fill="#2ea3f2" stroke="#1583cf" />
      <path d="M9 4h9M6 8h9M3 12h6M2 20h8M5 24h4" stroke="#9fc6e6" strokeWidth="1.2" />
    </svg>
  ),
  Desktop: (
    <svg width="32" height="32" viewBox="0 0 32 32">
      <path d="M2 5h28v22H2z" fill="#1a9cff" />
      <path d="M17 5h13v22H9z" fill="#3bb0ff" opacity=".6" />
      <path d="M2.5 5.5h27v21h-27z" fill="none" stroke="#0a74c4" />
      <path d="M3 25.5h26" stroke="#0b5e9e" />
      <path d="M23 25.5h5" stroke="#fff" strokeDasharray="1 1" />
    </svg>
  ),
  Bibliotheken: (
    <svg width="32" height="32" viewBox="0 0 32 32">
      <path d="M2 3h12l2 3-2 4H2z" fill="#e0a100" />
      <path d="M2 7h12l2-2h14v24H2z" fill="#ffd35c" />
      <path d="M2 20h28v9H2z" fill="#f5c53e" opacity=".6" />
      <path d="M7 29V18.5h18V29h-6v-5.5h-6V29z" fill="#3b93dc" />
    </svg>
  ),
  "Dieser PC": (
    <svg width="34" height="32" viewBox="0 0 34 32">
      <path d="M11 2 31 7v17L11 18z" fill="#39aef5" stroke="#44535e" />
      <path d="M11.5 2.5 24 6 13 18z" fill="#7ccbfb" opacity=".7" />
      <path d="M18 21l7 2v2l3 1-5 2-8-3z" fill="#c9d0d6" />
      <path d="M1 24l7-3 20 6-7 3z" fill="#d9dee2" stroke="#a8b0b6" strokeDasharray="1.5 1" />
    </svg>
  ),
  Netzwerk: (
    <svg width="32" height="32" viewBox="0 0 32 32">
      <circle cx="19.5" cy="12.5" r="11" fill="#4aa3cf" />
      <path d="M14 4c3-2 7-2 9 0l-3 4-5 1zM24 9l5 1c2 4 0 8-3 10l-3-5z" fill="#a5dcd9" />
      <path d="M3 10 21 15v14L3 24z" fill="#39aef5" stroke="#35566b" />
      <path d="M3.5 10.5 14 13.5 5 24z" fill="#7ccbfb" opacity=".7" />
      <path d="M9 27l8 2 2 2-4 1-8-2z" fill="#b9c2c9" />
    </svg>
  ),
};

/* ---------- sections ---------- */

function TopBars() {
  return (
    <>
      <MenuBar>
        <PsLogo>Ps</PsLogo>
        <Menus>
          {menus.map((m) => (
            <MenuItem key={m}>{m}</MenuItem>
          ))}
        </Menus>
        <WinButtons>
          <WinButton $w={28} aria-label="Minimieren"><MinimizeIcon /></WinButton>
          <WinButton aria-label="Wiederherstellen">
            <Svg w={12} h={10}>
              <path d="M5 1h6v5H8M1 4h6v5H1z" strokeWidth="2" />
            </Svg>
          </WinButton>
          <WinButton $w={47} aria-label="Schließen"><CrossIcon /></WinButton>
        </WinButtons>
      </MenuBar>
      <Options>
        <Grip $v />
        <OptGroup $pr={15} $color={c.mute}>
          <IconButton aria-label="Startseite"><Icon name="home" /></IconButton>
        </OptGroup>
        <Sep />
        <OptGroup $pl={5} $pr={8} $gap={7} $color="#d0d0d0">
          <IconButton aria-label="Verschieben"><Icon name="move" size={17} /></IconButton>
          <IconButton $w={8} $color={c.mute} aria-label="Vorgaben"><Chevron /></IconButton>
        </OptGroup>
        <Sep />
        <OptGroup $pl={7} $pr={9} $gap={15}>
          <CheckLabel $gap={3}><Check $small />Autom. ausw.:</CheckLabel>
          <Select label="Ebene oder Gruppe" value="Gruppe" options={["Gruppe", "Ebene"]} w={61} h={21} color="#d0d0d0" pl={7} arrow={c.mute} ar={3} />
        </OptGroup>
        <Sep />
        <OptGroup $pl={8} $pr={14}>
          <CheckLabel $gap={3}><Check $small />Transformationsstrg.</CheckLabel>
        </OptGroup>
        <Sep />
        <OptGroup $gap={6} $color={c.mute}>
          {["alignL", "alignC", "alignR"].map((n) => (
            <IconButton key={n} aria-label={n}><Icon name={n} /></IconButton>
          ))}
          <Spaced $pl={8}><IconButton aria-label="distV"><Icon name="distV" /></IconButton></Spaced>
        </OptGroup>
        <Sep />
        <OptGroup $gap={6} $color={c.mute}>
          {["alignT", "alignM", "alignB"].map((n) => (
            <IconButton key={n} aria-label={n}><Icon name={n} /></IconButton>
          ))}
          <Spaced $pl={8}><IconButton aria-label="distH"><Icon name="distH" /></IconButton></Spaced>
        </OptGroup>
        <Sep />
        <OptGroup $color="#e0e0e0">
          <IconButton aria-label="Weitere Optionen"><Icon name="dots" size={18} /></IconButton>
        </OptGroup>
        <Sep />
        <OptGroup $pl={9} $gap={6} $color={c.dim}>
          3D-Modus:
          <Spaced $gap={6} $pl={6}>
            {["orbit", "roll", "pan", "slide", "cam"].map((n) => (
              <IconButton key={n} $color={c.mute} aria-label={n}><Icon name={n} size={18} /></IconButton>
            ))}
          </Spaced>
        </OptGroup>
        <Fill />
        <OptGroup $pl={0} $pr={0} $gap={8} $color={c.mute}>
          <IconButton aria-label="Konto"><Icon name="user" size={18} /></IconButton>
          <IconButton aria-label="Suchen"><Icon name="search" size={18} /></IconButton>
          <Spaced $gap={6}>
            <IconButton $w={24} aria-label="Arbeitsbereich"><Icon name="workspace" /></IconButton>
            <IconButton $w={8} $color="#5a5a5a" aria-label="Arbeitsbereiche"><Chevron /></IconButton>
          </Spaced>
          <IconButton aria-label="Freigeben"><Icon name="share" /></IconButton>
        </OptGroup>
      </Options>
    </>
  );
}

function Toolbar() {
  return (
    <Column $left>
      <ColumnHead aria-label="Werkzeuge ausklappen">
        <Svg w={8} h={6}><path d="M1 0l2.5 3L1 6M5 0l2.5 3L5 6" strokeWidth="1.2" /></Svg>
      </ColumnHead>
      <GripRow><Grip /></GripRow>
      <ToolList>
        {tools.map(([n, label], i) => (
          <Tool key={n} aria-label={label} $active={i === 0}>
            {n === "gradient" ? <GradientTool /> : <Icon name={n} size={19} />}
            {!noCorner.includes(n) && <Corner />}
          </Tool>
        ))}
        <MiniRow>
          <Svg size={11}>
            <F d="M4 4h7v7H4z" />
            <rect x="1" y="1" width="5.5" height="5.5" fill="#000" strokeWidth="1.2" />
          </Svg>
          <Svg size={11}>
            <path d="M2 3h6.5v6" strokeWidth="1.3" />
            <F d="M0 3 3.5 0v6zM5.5 7.5h6l-3 3.5z" />
          </Svg>
        </MiniRow>
        <Swatches>
          <Swatch $area="1 / 1 / 3 / 3" $z={1} $color="#ff0000" aria-label="Vordergrundfarbe" />
          <Swatch $area="2 / 2 / 4 / 4" $z={0} $color="#ffffff" aria-label="Hintergrundfarbe" />
        </Swatches>
        <Tool aria-label="Maskierungsmodus"><Icon name="mask" /></Tool>
        <Tool aria-label="Bildschirmmodus"><Icon name="screen" /><Corner /></Tool>
      </ToolList>
    </Column>
  );
}

function Dock() {
  return (
    <Column>
      <ColumnHead $end aria-label="Bedienfelder ausklappen">
        <Svg w={8} h={6}><path d="M3 0 .5 3 3 6M7 0 4.5 3 7 6" strokeWidth="1.2" /></Svg>
      </ColumnHead>
      {dock.map((g) => (
        <DockGroup key={g[0]}>
          <Grip />
          {g.map((n) => (
            <DockButton key={n} aria-label={n}><Icon name={n} /></DockButton>
          ))}
        </DockGroup>
      ))}
    </Column>
  );
}

function Document() {
  return (
    <DocWindow>
      <DocTitle>
        <DocBadge>Ps</DocBadge>
        <DocName>Unbenannt-1 bei 100% (RGB/8) *</DocName>
        <WinButtons>
          <WinButton $w={28} aria-label="Minimieren"><MinimizeIcon /></WinButton>
          <WinButton aria-label="Maximieren">
            <Svg w={10} h={8}><rect x="1" y="1" width="8" height="6" strokeWidth="2" /></Svg>
          </WinButton>
          <WinButton $w={47} aria-label="Schließen"><CrossIcon /></WinButton>
        </WinButtons>
      </DocTitle>
      <DocBody>
        <RulerOrigin />
        <HRuler>
          {[0, 50, 100, 150, 200, 250].map((n) => <HTick key={n}>{n}</HTick>)}
        </HRuler>
        <span />
        <VRuler>
          {["0", "50", "100", "150"].map((n) => (
            <VTick key={n}>{n.split("").map((d, i) => <span key={i}>{d}</span>)}</VTick>
          ))}
        </VRuler>
        <Paper />
        <span />
        <DocStatus>100%</DocStatus>
        <DocCorner />
      </DocBody>
    </DocWindow>
  );
}

const tabs = [["Original"], ["Optimiert", true], ["2fach"], ["4fach"]];
const playerKeys = [
  ["Erster", "M0 4l8-4v8zM8 4l8-4v8z"],
  ["Zurück", "M2 4l7-4v8zM11 0h2v8h-2z"],
  ["Abspielen", "M4 0l9 4-9 4z"],
  ["Weiter", "M3 0h2v8H3zM7 0l7 4-7 4z"],
  ["Letzter", "M0 0l8 4-8 4zM8 0l8 4-8 4z"],
];

function WebSettings() {
  return (
    <Settings>
      <Group>
        <Legend>
          <label htmlFor="preset">Vorgabe:</label>
          <Select id="preset" value="PNG-24" w={149} />
        </Legend>
        <FlyButton $top={-13} aria-label="Optimierungsmenü"><FlyIcon /></FlyButton>
        <Inner>
          <Legend><Select label="Format" value="PNG-24" w={149} /></Legend>
          <Line>
            <CheckLabel $gap={5}><Check defaultChecked />Transparenz</CheckLabel>
            <Fill />
            <span>Hintergrund:</span>
            <ColorCombo>
              <ColorChip>--</ColorChip>
              <ComboArrow aria-label="Hintergrundfarbe wählen"><Chevron bold /></ComboArrow>
            </ColorCombo>
          </Line>
          <Line $mt={2}><CheckLabel $gap={5}><Check />Interlaced</CheckLabel></Line>
          <Line><CheckLabel $gap={5}><Check />Farbprofil einbetten</CheckLabel></Line>
        </Inner>
        <Line $pl={6} $mt={2}><CheckLabel $gap={5}><Check defaultChecked />In sRGB konvertieren</CheckLabel></Line>
        <Line $mt={3}><label htmlFor="prev">Vorschau:</label><Select id="prev" value="Bildschirmfarbe" /></Line>
        <Line $mt={5}><label htmlFor="meta">Metadaten:</label><Select id="meta" value="Ohne" /></Line>
      </Group>
      <Group $pb={1}>
        <Legend $pr={12}>Farbtabelle</Legend>
        <FlyButton $top={-11} aria-label="Farbtabellenmenü"><FlyIcon /></FlyButton>
        <ColorTable />
        <TableTools>
          <IconButton aria-label="Transparent"><Icon name="transp" size={18} /></IconButton>
          <IconButton aria-label="Websicher"><Icon name="cube" /></IconButton>
          <IconButton aria-label="Fixieren"><Icon name="lock" /></IconButton>
          <Spaced $pl={16}><IconButton aria-label="Neue Farbe"><Icon name="note" /></IconButton></Spaced>
          <IconButton aria-label="Löschen"><Icon name="trash" /></IconButton>
        </TableTools>
      </Group>
      <Group $pb={6}>
        <Legend $pr={12}>Bildgröße</Legend>
        <SizeGrid>
          <label htmlFor="bw">B:</label>
          <NumInput id="bw" defaultValue="300" />
          <UnitLabel>Px</UnitLabel>
          <LinkCell>
            <Svg w={26} h={24}>
              <path d="M4 1h5v22H4" strokeWidth="2" />
              <path d="M16 9V7a3 3 0 0 1 6 0v2M16 15v2a3 3 0 0 0 6 0v-2M19 9v6" strokeWidth="1.6" />
            </Svg>
          </LinkCell>
          <label htmlFor="pct">Prozent:</label>
          <Spaced $pl={1}><NumInput id="pct" $w={104} defaultValue="100" /><UnitLabel>%</UnitLabel></Spaced>
          <label htmlFor="bh">H:</label>
          <NumInput id="bh" defaultValue="200" />
          <UnitLabel>Px</UnitLabel>
          <label htmlFor="qual">Qualität:</label>
          <Spaced $pl={3}><Select id="qual" value="Bikubisch" /></Spaced>
        </SizeGrid>
      </Group>
      <Group>
        <Legend $pr={12}>Animation</Legend>
        <Line $mt={2} $gap={3}>
          <label htmlFor="loop">Optionen für Schleifenwiedergabe:</label>
          <Select id="loop" value="Unbegrenzt" />
        </Line>
        <Player>
          <FrameCount>1 von 1</FrameCount>
          {playerKeys.map(([label, d]) => (
            <PlayButton key={label} aria-label={label}>
              <Svg w={16} h={8}><F d={d} /></Svg>
            </PlayButton>
          ))}
        </Player>
      </Group>
    </Settings>
  );
}

function SaveForWeb() {
  return (
    <WebDialog>
      <WebTitle>Für Web speichern (100 %)</WebTitle>
      <WebMain>
        <WebTools>
          <WebTool $on aria-label="Hand"><Icon name="hand" size={19} /></WebTool>
          <WebTool aria-label="Slice-Auswahl"><Icon name="slice" size={18} /></WebTool>
          <WebTool aria-label="Zoom"><Icon name="zoom" size={19} /></WebTool>
          <WebTool aria-label="Pipette"><Icon name="dropper" size={19} /></WebTool>
          <ToolRule />
          <ToolStack>
            <WebTool $boxed $on aria-label="Pipettenfarbe"><BlackChip /></WebTool>
            <WebTool $boxed $on $h={23} aria-label="Slices einblenden"><Icon name="doc" /></WebTool>
          </ToolStack>
        </WebTools>
        <WebContent>
          <TipBar>
            <Icon name="info" size={18} />
            <TipText>Tipp: Wähle „Datei“ &gt; „Exportieren“ &gt; „Exportieren als...“ oder klicke mit der rechten Maustaste auf eine Ebene, um Elemente schneller zu exportieren</TipText>
            <DarkButton $w={120}>Mehr</DarkButton>
          </TipBar>
          <Panes>
            <PreviewCol>
              <Preview>
                <Tabs>
                  {tabs.map(([t, on]) => <Tab key={t} $on={on}>{t}</Tab>)}
                </Tabs>
                <Frame>
                  <ImagePane><ImagePaper /></ImagePane>
                  <FileInfo>
                    <div>PNG-24</div>
                    <div>525 Byte</div>
                    <InfoLine>1 Sek. bei 56,6 Kbit/s<FlyIcon /></InfoLine>
                  </FileInfo>
                </Frame>
              </Preview>
              <ReadoutRow>
                <StepButton aria-label="Verkleinern">-</StepButton>
                <StepButton aria-label="Vergrößern">+</StepButton>
                <ComboBox $w={73}>
                  <ComboInput aria-label="Zoomstufe" defaultValue="100%" />
                  <ComboArrow aria-label="Zoomstufen"><Chevron bold /></ComboArrow>
                </ComboBox>
                <Readout>
                  <Val $w={49}>R: --</Val><Val $w={50}>G: --</Val><Val $w={81}>B: --</Val>
                  <Sep /><Val $w={15} />
                  <Val $w={69}>Alpha: --</Val><Val $w={75}>Hex: --</Val><Val $w={50}>Index: --</Val>
                </Readout>
              </ReadoutRow>
            </PreviewCol>
            <WebSettings />
          </Panes>
          <WebFooter>
            <Spaced $gap={9}>
              <DarkButton $w={88}>Vorschau...</DarkButton>
              <ComboBox $w={51} $h={26}>
                <IconButton $w={31} aria-label="Browservorschau">
                  <Svg w={22} h={18}>
                    <circle cx="8" cy="8" r="7.3" fill="#777" stroke="none" />
                    <path d="M3 4l4 2 3-3M4 12l3-3 3 2" stroke="#323232" />
                    <circle cx="15" cy="10" r="6.5" fill="#8a8a8a" stroke="#323232" strokeWidth="1" />
                    <path d="M13 8.5c0-3 4.3-2.7 4 0-.2 1.3-2 1.3-2 3M15 12.5v1.5" stroke="#222" strokeWidth="1.5" />
                  </Svg>
                </IconButton>
                <ComboArrow $w={18} aria-label="Browser wählen"><Chevron bold /></ComboArrow>
              </ComboBox>
            </Spaced>
            <Fill />
            <Spaced $gap={14}>
              <Svg w={12} h={26}>
                <path d="M6 7l6 12H0z" fill="#8f7625" stroke="none" />
                <path d="M6 10.5v4.5M6 16v2" stroke="#222" />
              </Svg>
              <Spaced $gap={18}>
                <DarkButton $pill $w={110}>Speichern...</DarkButton>
                <DarkButton $pill $w={110}>Abbrechen</DarkButton>
                <DarkButton $pill $w={110}>Fertig</DarkButton>
              </Spaced>
            </Spaced>
          </WebFooter>
        </WebContent>
      </WebMain>
    </WebDialog>
  );
}

const LightCombo = ({ id, value, w = 246, input, disabled, plain }) => (
  <LightSelectBox
    $w={w}
    $bg={disabled ? "#cccccc" : plain ? "#e1e1e1" : "#fff"}
    $edge={disabled ? "#bfbfbf" : plain ? "#adadad" : "#7a7a7a"}
    $arrow={disabled ? "#a0a0a0" : "#444"}
    $h={input ? 22 : 21}
  >
    <span />
    {input ? (
      <LightInput id={id} defaultValue={value} />
    ) : (
      <LightSelect id={id} disabled={disabled} defaultValue={value}><option>{value}</option></LightSelect>
    )}
    <Chevron />
  </LightSelectBox>
);

function SaveAs() {
  return (
    <SaveDialog>
      <SaveTitle>
        <SaveName>Optimierte Version speichern unter</SaveName>
        <CloseX aria-label="Schließen">
          <Svg size={11}><path d="M.5.5l10 10M10.5.5l-10 10" strokeWidth="1.1" /></Svg>
        </CloseX>
      </SaveTitle>
      <LookRow>
        <LookLabel htmlFor="lookin">Speichern in:</LookLabel>
        <LightSelectBox $w={261} $ml={7}>
          <svg width="20" height="17" viewBox="0 0 20 17">
            <path d="M7 .5h12v16H7z" fill="#ffe69a" stroke="#f0cf6a" />
            <path d="M17 9h2.5v7.5H17z" fill="#ffd75a" stroke="#e6bb40" />
          </svg>
          <LightSelect id="lookin" $pl={6} defaultValue="Test"><option>Test</option></LightSelect>
          <Chevron />
        </LightSelectBox>
        <NavIcons>
          <IconButton $w={18} aria-label="Zurück">
            <svg width="16" height="16" viewBox="0 0 16 16">
              <circle cx="8" cy="8" r="7.5" fill="#2372b5" stroke="#5d7f9c" />
              <path d="M1.5 7a6.5 6 0 0 1 13 0z" fill="#5a7ea6" />
              <path d="M3.5 8 8 4v2.7h4.5v2.6H8V12z" fill="#fff" />
            </svg>
          </IconButton>
          <IconButton $w={18} aria-label="Nach oben">
            <svg width="16" height="16" viewBox="0 0 16 16">
              <path d="M1 6h3l1-1h6v10H2z" fill="#ffe07a" stroke="#d9a93a" />
              <path d="M5 14c4-1 5-4 4.5-7H6.5L11 1l4 5h-2.5c.5 4-1 7-5 8z" fill="#21a121" stroke="#0c730c" strokeWidth=".6" />
            </svg>
          </IconButton>
          <IconButton $w={18} aria-label="Neuer Ordner">
            <svg width="18" height="16" viewBox="0 0 18 16">
              <path d="M1 4h4l1 1h6v2h3l-3 8H1z" fill="#ffe07a" stroke="#d9a93a" />
              <path d="M14 .5v7M10.5 4h7M11.5 1.5l5 5M16.5 1.5l-5 5" stroke="#f0542a" strokeWidth="1.3" />
              <circle cx="14" cy="4" r="1.5" fill="#ffd23c" />
            </svg>
          </IconButton>
          <IconButton $w={26} aria-label="Ansicht">
            <svg width="25" height="16" viewBox="0 0 25 16">
              <path d="M.7 1h14.6v14H.7z" fill="#fff" stroke="#1a66c8" strokeWidth="1.4" />
              <path d="M0 0h16v4H0z" fill="#1a66c8" />
              <path d="M3 6.5h2M3 11h2" stroke="#d05030" strokeWidth="2" />
              <path d="M7 6.5h2M11 11h2" stroke="#3070c0" strokeWidth="2" />
              <path d="M11 6.5h2M7 11h2" stroke="#40a050" strokeWidth="2" />
              <path d="M18 6h7l-3.5 4z" fill="#222" />
            </svg>
          </IconButton>
        </NavIcons>
      </LookRow>
      <SaveBody>
        <Places>
          {Object.keys(PlaceIcon).map((p) => (
            <Place key={p} href="#">{PlaceIcon[p]}{p}</Place>
          ))}
        </Places>
        <SaveMain>
          <FileTable>
            <thead>
              <tr>
                <Th $w={272}>
                  <ThInner>
                    Name
                    <Svg w={9} h={6}><path d="M1 4.5l3.5-3.5L8 4.5" strokeWidth="1" stroke="#555" /></Svg>
                  </ThInner>
                </Th>
                <Th $w={144}>Änderungsdatum</Th>
                <Th>Typ</Th>
              </tr>
            </thead>
            <tbody>
              <tr><Td colSpan={3}>Es wurden keine Suchergebnisse gefunden.</Td></tr>
            </tbody>
          </FileTable>
          <HBar>
            <HArrow aria-label="Nach links"><Svg w={6} h={9}><path d="M5 1 1.5 4.5 5 8" strokeWidth="1.8" /></Svg></HArrow>
            <HThumb />
            <HArrow aria-label="Nach rechts"><Svg w={6} h={9}><path d="M1 1l3.5 3.5L1 8" strokeWidth="1.8" /></Svg></HArrow>
          </HBar>
          <SaveForm onSubmit={(e) => e.preventDefault()}>
            <FormLabel htmlFor="fn">Dateiname:</FormLabel>
            <LightCombo id="fn" value="Unbenannt-1.png" input />
            <PushButton $primary>Speichern</PushButton>
            <FormLabel htmlFor="ff">Format:</FormLabel>
            <LightCombo id="ff" value="Nur Bilder" plain />
            <PushButton type="button">Abbrechen</PushButton>
            <FormGap />
            <FormLabel htmlFor="fs">Einstellungen</FormLabel>
            <LightCombo id="fs" value="Standardeinstellungen" plain />
            <FormLabel htmlFor="fl">Slices:</FormLabel>
            <LightCombo id="fl" value="Alle Slices" plain disabled />
          </SaveForm>
        </SaveMain>
      </SaveBody>
      <SizeGrip>
        <Svg size={9}><F d="M6 0h2v2H6zM6 3h2v2H6zM3 3h2v2H3zM6 6h2v2H6zM3 6h2v2H3zM0 6h2v2H0z" /></Svg>
      </SizeGrip>
    </SaveDialog>
  );
}

export default function App() {
  return (
    <Shell>
      <Global />
      <TopBars />
      <Workspace>
        <Toolbar />
        <Stage>
          <Document />
          <SaveForWeb />
          <SaveAs />
        </Stage>
        <Dock />
      </Workspace>
      <StatusStrip><StripThumb /></StatusStrip>
    </Shell>
  );
}
